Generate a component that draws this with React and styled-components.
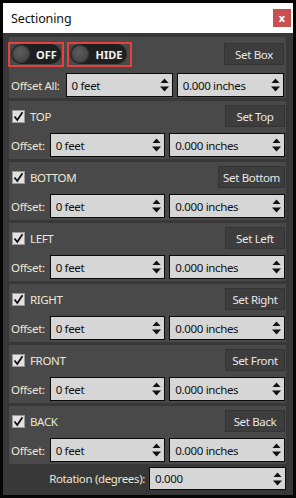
import React from 'react';
import styled, { createGlobalStyle } from 'styled-components';

const GlobalStyle = createGlobalStyle`
  html, body {
    margin: 0;
    padding: 0;
    background: #000;
  }
  * {
    box-sizing: border-box;
  }
`;

const Window = styled.div`
  width: 296px;
  height: 498px;
  border: 3px solid #050505;
  background: #383838;
  display: flex;
  flex-direction: column;
  font-family: 'Noto Sans', 'Liberation Sans', sans-serif;
  letter-spacing: -0.35px;
`;

const TitleBar = styled.div`
  height: 30px;
  background: #fff;
  display: flex;
  align-items: center;
  justify-content: space-between;
  padding: 0 2px 0 8px;
`;

const Title = styled.div`
  font-size: 12.5px;
  color: #111;
  letter-spacing: -0.1px;
`;

const CloseButton = styled.div`
  width: 18px;
  height: 18px;
  background: #c75050;
  color: #fff;
  font-weight: bold;
  font-size: 11px;
  letter-spacing: 0;
  display: flex;
  align-items: center;
  justify-content: center;
  line-height: 1;
  padding-bottom: 2px;
`;

const Body = styled.div`
  flex: 1;
  display: flex;
  flex-direction: column;
  gap: 3px;
  padding: 4px 7px 0 6px;
`;

const Section = styled.div`
  background: #494949;
  display: flex;
  flex-direction: column;
  gap: 6px;
  padding: ${p => (p.first ? '4px 2px 1px 2px' : '4px 1px 2px 2px')};
`;

const HeaderRow = styled.div`
  height: ${p => p.h || 22}px;
  display: flex;
  align-items: center;
  justify-content: space-between;
`;

const ToggleGroup = styled.div`
  display: flex;
  gap: 3px;
  margin-left: -3px;
`;

const ToggleFrame = styled.div`
  border: 2px solid #e8403f;
  padding: 1px ${p => p.padRight || 1}px 1px 1px;
  height: 25px;
  display: flex;
  align-items: center;
`;

const Pill = styled.div`
  width: ${p => p.w}px;
  height: 20px;
  border-radius: 10px;
  background: #1f1f1f;
  display: flex;
  align-items: center;
  padding-left: 1px;
`;

const Knob = styled.div`
  width: 18px;
  height: 18px;
  border-radius: 50%;
  background: radial-gradient(circle at 45% 40%, #5e5e5e, #444 70%, #3a3a3a);
  box-shadow: inset 0 0 0 1px #333;
`;

const PillText = styled.span`
  flex: 1;
  text-align: center;
  color: #f2f2f2;
  font-weight: bold;
  font-size: 11px;
  letter-spacing: 0;
  padding-left: 2px;
`;

const SetButton = styled.div`
  min-width: 60px;
  height: 22px;
  padding: 0 4px;
  background: #3d3d3d;
  border: 1px solid #343434;
  color: #e8e8e8;
  font-size: 11.5px;
  display: flex;
  align-items: center;
  justify-content: center;
`;

const CheckLabel = styled.div`
  display: flex;
  align-items: center;
  gap: 5px;
  color: #ebe7d3;
  font-size: 11.5px;
  padding-left: 1px;
`;

const CheckBox = styled.div`
  width: 13px;
  height: 13px;
  background: #e2e2e2;
  border: 1px solid #9a9a9a;
  display: flex;
  align-items: center;
  justify-content: center;
`;

const FieldRow = styled.div`
  display: flex;
  align-items: center;
  gap: 4px;
`;

const Label = styled.span`
  color: #ebe7d3;
  font-size: 11.5px;
  margin-right: ${p => p.mr || 1}px;
  white-space: nowrap;
`;

const Spin = styled.div`
  flex: ${p => (p.w ? 'none' : 1)};
  width: ${p => (p.w ? `${p.w}px` : 'auto')};
  min-width: 0;
  height: ${p => p.h || 24}px;
  background: #d6d6d6;
  border: 1px solid #0a0a0a;
  display: flex;
  align-items: center;
  justify-content: space-between;
  padding: 0 3px 0 5px;
  color: #111;
  font-size: 11.5px;
`;

const RotationRow = styled.div`
  display: flex;
  justify-content: flex-end;
  align-items: center;
  gap: 3px;
`;

const Arrows = () => (
  <svg width="9" height="14" viewBox="0 0 9 14">
    <path d="M4.5 0.5 L8.5 5 L0.5 5 Z" fill="#111" />
    <path d="M0 8.5 L9 8.5 L4.5 13.5 Z" fill="#111" />
  </svg>
);

const Check = () => (
  <svg width="11" height="11" viewBox="0 0 11 11">
    <path d="M1.5 5.5 L4.3 9 L9.5 1.2" stroke="#111" strokeWidth="1.8" fill="none" />
  </svg>
);

const Spinner = ({ value, w, h }) => (
  <Spin w={w} h={h}>
    <span>{value}</span>
    <Arrows />
  </Spin>
);

const OffsetRow = ({ label = 'Offset:', mr }) => (
  <FieldRow>
    <Label mr={mr}>{label}</Label>
    <Spinner value="0 feet" />
    <Spinner value="0.000 inches" />
  </FieldRow>
);

const sides = [
  ['TOP', 'Set Top'],
  ['BOTTOM', 'Set Bottom'],
  ['LEFT', 'Set Left'],
  ['RIGHT', 'Set Right'],
  ['FRONT', 'Set Front'],
  ['BACK', 'Set Back'],
];

export default function App() {
  return (
    <>
      <GlobalStyle />
      <Window>
        <TitleBar>
          <Title>Sectioning</Title>
          <CloseButton>x</CloseButton>
        </TitleBar>
        <Body>
          <Section first>
            <HeaderRow h={26}>
              <ToggleGroup>
                <ToggleFrame padRight={1}>
                  <Pill w={50}>
                    <Knob />
                    <PillText>OFF</PillText>
                  </Pill>
                </ToggleFrame>
                <ToggleFrame padRight={3}>
                  <Pill w={57}>
                    <Knob />
                    <PillText>HIDE</PillText>
                  </Pill>
                </ToggleFrame>
              </ToggleGroup>
              <SetButton>Set Box</SetButton>
            </HeaderRow>
            <OffsetRow label="Offset All:" mr={2} />
          </Section>
          {sides.map(([name, btn]) => (
            <Section key={name}>
              <HeaderRow>
                <CheckLabel>
                  <CheckBox>
                    <Check />
                  </CheckBox>
                  {name}
                </CheckLabel>
                <SetButton>{btn}</SetButton>
              </HeaderRow>
              <OffsetRow />
            </Section>
          ))}
          <RotationRow>
            <Label>Rotation (degrees):</Label>
            <Spinner value="0.000" w={137} h={23} />
          </RotationRow>
        </Body>
      </Window>
    </>
  );
}
